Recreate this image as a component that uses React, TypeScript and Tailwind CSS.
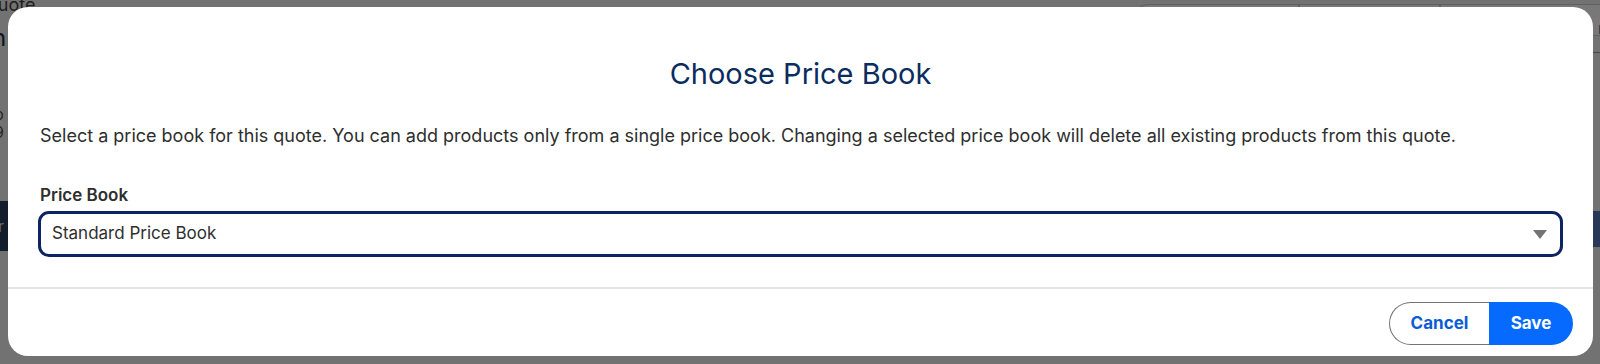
import React from "react";

export default function App() {
  return (
    <div
      className="relative w-[1600px] h-[364px] overflow-hidden bg-white"
      style={{ fontFamily: "Inter, 'Noto Sans', 'Liberation Sans', sans-serif" }}
    >
      {/* page behind the backdrop */}
      <div className="flex flex-col w-full h-full bg-[#f3f3f3]">
        <div className="flex items-start justify-between h-[24px]">
          <div className="-mt-[9px] text-[18px] text-[#444] -ml-[16px]">Quote</div>
          <div className="flex mt-[4px] mr-[-20px]">
            <div className="w-[167px] h-[32px] border border-[#c9c9c9] rounded-l-[16px] bg-white" />
            <div className="w-[141px] h-[32px] border border-[#c9c9c9] bg-white" />
            <div className="w-[180px] h-[32px] border border-[#c9c9c9] bg-white" />
          </div>
        </div>
        <div className="flex justify-between">
          <div className="text-[24px] text-[#1a2b4a] -ml-[8px] leading-[28px]">n</div>
          <div className="text-[16px] text-[#3a5fb0] -mr-[4px] mt-[-8px]">r</div>
        </div>
        <div className="h-[1px] bg-[#999] ml-[1593px]" />
        <div className="flex flex-col mt-[52px] text-[16px] text-[#555] -ml-[6px] leading-[18px]">
          <span>b</span>
          <span>9</span>
        </div>
        <div className="flex justify-between mt-[60px]">
          <div className="w-[20px] h-[50px] bg-[#2c3e5c] text-[#dde] text-[16px] flex items-center -ml-[10px] pl-[8px]">r</div>
          <div className="w-[20px] h-[36px] mt-[10px] bg-[#5577bb]" />
        </div>
      </div>

      {/* backdrop */}
      <div className="absolute inset-0 bg-[rgba(0,0,0,0.53)]" />

      {/* modal */}
      <div className="absolute left-[8px] top-[7px] w-[1585px] h-[349px] rounded-[20px] bg-white flex flex-col overflow-hidden">
        <div className="flex flex-col px-[32px] pt-[49px] pb-[30px]">
          <h2 className="text-center text-[29px] leading-[35px] text-[#0b2c5f]">Choose Price Book</h2>
          <p className="mt-[33px] text-[18px] leading-[24px] text-[#2e2e2e]">
            Select a price book for this quote. You can add products only from a single price book. Changing a selected price book will delete all existing products from this quote.
          </p>
          <label className="mt-[36px] text-[17px] leading-[22px] font-semibold text-[#2e2e2e]">Price Book</label>
          <div className="mt-[5px] -mx-[2px] h-[46px] border-[3px] border-[#0c2461] rounded-[11px] flex items-center justify-between pl-[11px] pr-[13px]">
            <span className="text-[17px] text-[#2e2e2e]">Standard Price Book</span>
            <svg width="14" height="9" viewBox="0 0 14 9">
              <path d="M0 0 L14 0 L7 9 Z" fill="#747474" />
            </svg>
          </div>
        </div>
        <div className="border-t-2 border-[#e5e5e5] flex justify-end pt-[13px] pr-[20px]">
          <div className="flex h-[43px]">
            <button className="w-[100px] h-[43px] border border-[#747474] border-r-0 rounded-l-full bg-white text-[#0b5cd5] text-[17px] font-bold">
              Cancel
            </button>
            <button className="w-[84px] h-[43px] rounded-r-full bg-[#066afe] text-white text-[17px] font-bold">
              Save
            </button>
          </div>
        </div>
      </div>
    </div>
  );
}
